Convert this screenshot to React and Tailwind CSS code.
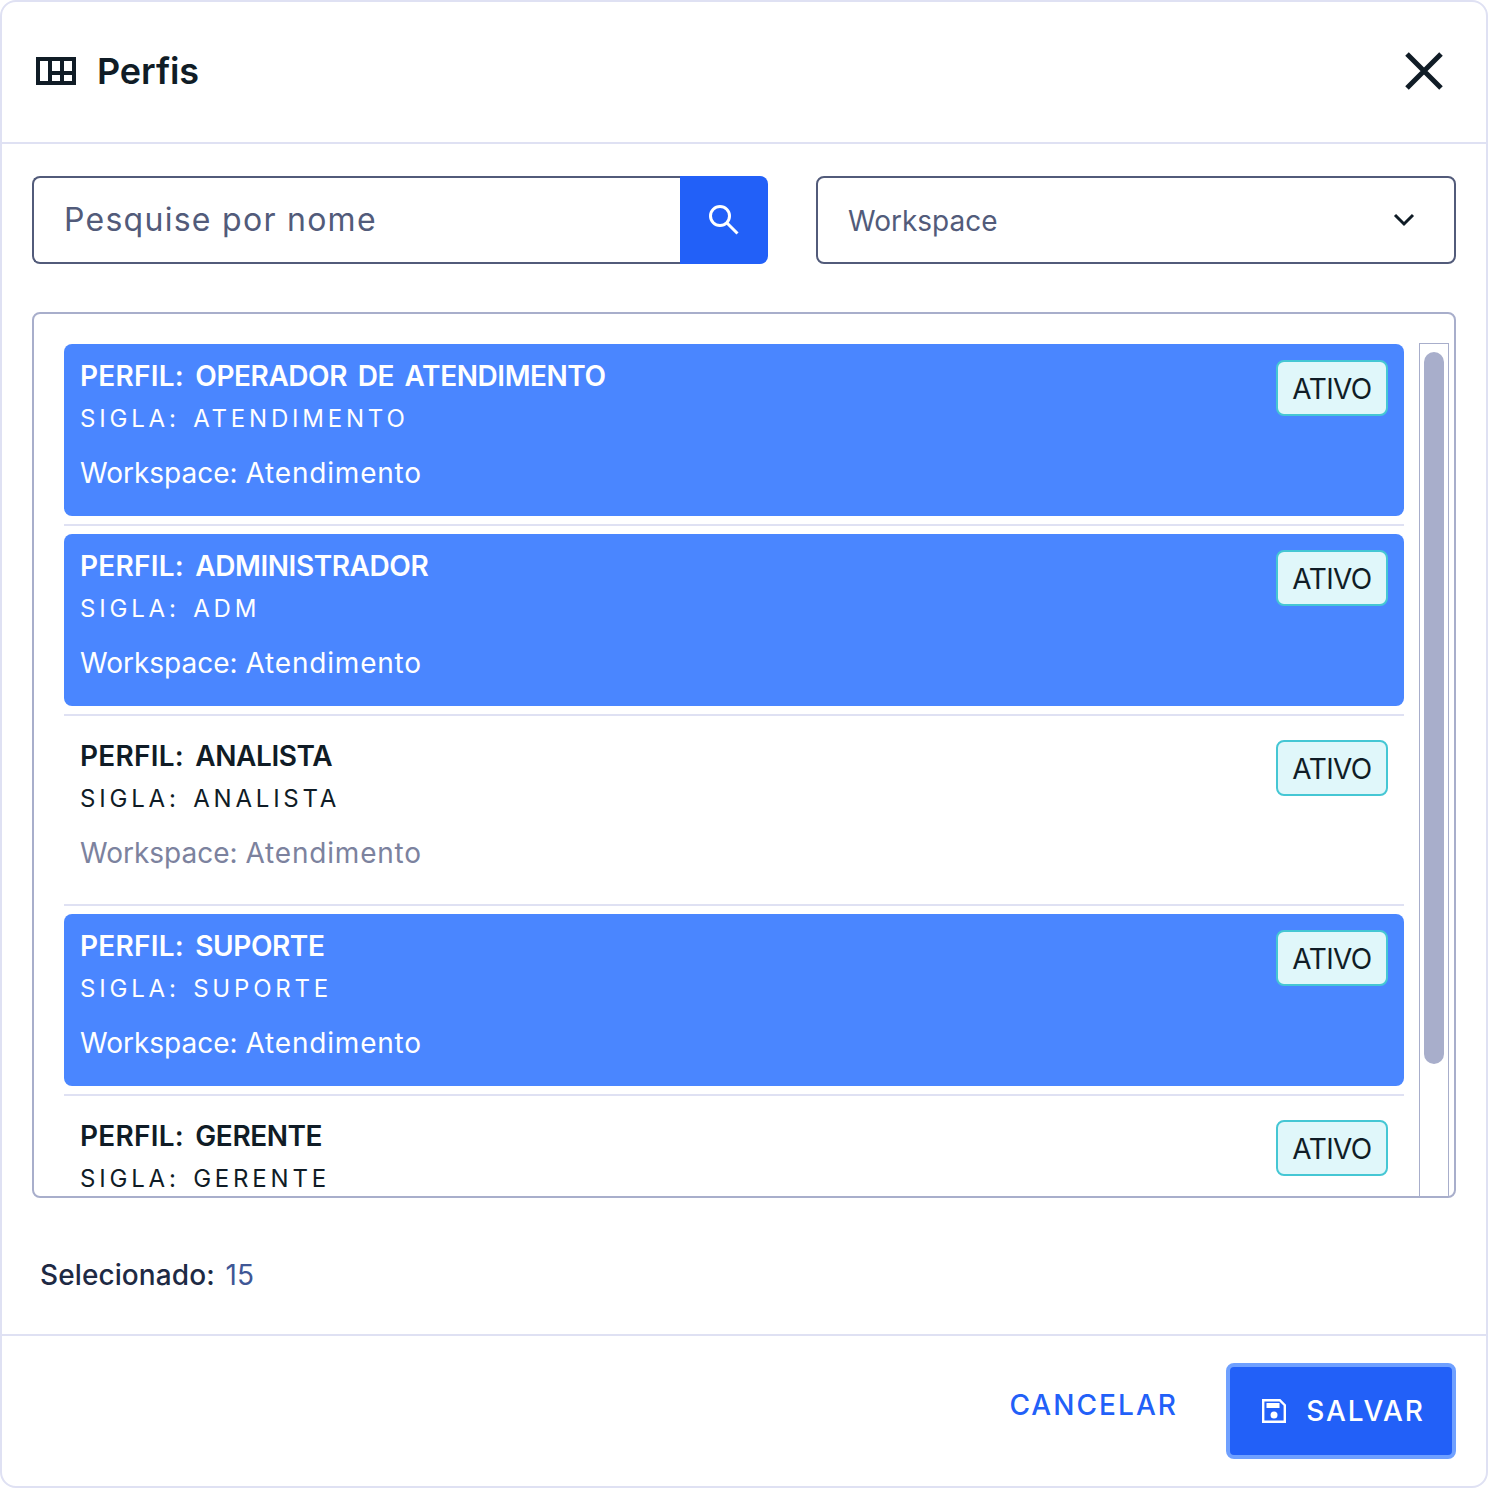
import React from 'react';

const PROFILES = [
  { name: 'OPERADOR DE ATENDIMENTO', sigla: 'ATENDIMENTO', selected: true },
  { name: 'ADMINISTRADOR', sigla: 'ADM', selected: true },
  { name: 'ANALISTA', sigla: 'ANALISTA', selected: false },
  { name: 'SUPORTE', sigla: 'SUPORTE', selected: true },
  { name: 'GERENTE', sigla: 'GERENTE', selected: false },
];

const ProfileRow = ({ profile }) => {
  const { name, sigla, selected } = profile;
  return (
    <div className="shrink-0">
      <div className={`flex h-[172px] justify-between rounded-lg p-4 ${selected ? 'bg-[#4a86ff]' : 'bg-white'}`}>
        <div>
          <div className={`text-[28px] leading-8 font-semibold [word-spacing:4px] ${selected ? 'text-white' : 'text-[#101c26]'}`}>
            <span className="tracking-[0.25px]">PERFIL: </span>
            <span className="tracking-[-0.43px]">{name}</span>
          </div>
          <div className={`mt-[11px] text-[24px] leading-8 font-normal tracking-[3.8px] [word-spacing:3px] ${selected ? 'text-white' : 'text-[#101c26]'}`}>
            SIGLA: {sigla}
          </div>
          <div className={`mt-[22px] text-[28px] leading-8 ${selected ? 'text-white' : 'text-[#7c829e]'}`}>
            Workspace: <span className="tracking-[0.81px]">Atendimento</span>
          </div>
        </div>
        <div className="flex h-14 w-28 items-center justify-center rounded-lg border-2 border-[#45c7d4] bg-[#e0f7fa] pt-[2px] text-[28px] tracking-[-0.6px] text-[#101c26]">
          ATIVO
        </div>
      </div>
      <div className="my-2 h-[2px] bg-[#dfe1f3]" />
    </div>
  );
};

export default function App() {
  return (
    <div className="flex h-[1488px] w-[1488px] flex-col rounded-2xl border-2 border-[#dfe1f3] bg-white font-['Inter',sans-serif]">
      {/* header */}
      <div className="flex h-[142px] shrink-0 items-center justify-between border-b-2 border-[#dfe1f3] pr-[42px] pb-[2px] pl-[34px]">
        <div className="flex items-center gap-[21px]">
          <svg width="40" height="28" viewBox="0 0 40 28" fill="#101c26">
            <path fillRule="evenodd" d="M0 0h40v28H0zM4 4v20h8V4zM16 4v10h8V4zM28 4v10h8V4zM16 18v6h8v-6zM28 18v6h8v-6z" />
          </svg>
          <span className="text-[36px] leading-10 font-semibold tracking-[-0.1px] text-[#101c26]">Perfis</span>
        </div>
        <svg width="40" height="40" viewBox="0 0 40 40" fill="none" stroke="#101c26" strokeWidth="5">
          <path d="M3 3l34 34M37 3L3 37" />
        </svg>
      </div>

      {/* body */}
      <div className="flex min-h-0 flex-1 flex-col px-[30px] pt-8">
        <div className="flex h-[88px] shrink-0 gap-12">
          <div className="flex w-[736px]">
            <div className="flex flex-1 items-center rounded-l-lg border-2 border-r-0 border-[#525b7a] pl-[30px] text-[32px] tracking-[1.27px] text-[#525b7a]">
              Pesquise por nome
            </div>
            <div className="flex w-[88px] items-center justify-center rounded-r-lg bg-[#2260f8]">
              <svg width="30" height="30" viewBox="0 0 30 30" fill="none" stroke="white" strokeWidth="3">
                <circle cx="11" cy="11" r="9.5" />
                <path d="M18 18l10.5 10.5" />
              </svg>
            </div>
          </div>
          <div className="flex w-[640px] items-center justify-between rounded-lg border-2 border-[#525b7a] pr-[38px] pl-[30px] text-[28px] text-[#525b7a]">
            <span className="pt-[2px]">Workspace</span>
            <svg width="24" height="24" viewBox="0 0 24 24" fill="none" stroke="#101c26" strokeWidth="3">
              <path d="M3 7l9 9 9-9" />
            </svg>
          </div>
        </div>

        {/* list */}
        <div className="mt-12 flex h-[886px] shrink-0 overflow-hidden rounded-lg border-2 border-[#a8aecb] pt-[30px] pl-[30px]">
          <div className="flex w-[1340px] shrink-0 flex-col overflow-hidden">
            {PROFILES.map((profile) => (
              <ProfileRow key={profile.name} profile={profile} />
            ))}
          </div>
          <div className="-mt-px ml-[15px] h-[853px] w-[30px] shrink-0 border border-b-0 border-[#a8aecb] px-1 pt-2">
            <div className="h-[712px] w-5 rounded-[10px] bg-[#a8aecb]" />
          </div>
        </div>

        <div className="mt-[61px] pl-2 text-[28px] leading-8 font-medium tracking-[0.1px] [word-spacing:3px] text-[#1e2a44]">
          Selecionado: <span className="font-normal text-[#3f5796]">15</span>
        </div>
      </div>

      {/* footer */}
      <div className="flex h-[152px] shrink-0 items-start justify-end gap-12 border-t-2 border-[#dfe1f3] pt-[27px] pr-[30px]">
        <button className="mt-[10px] h-[64px] text-[28px] font-medium tracking-[2.05px] text-[#2260f8]">CANCELAR</button>
        <button className="flex h-[96px] w-[230px] items-center justify-center gap-5 rounded-lg border-4 border-[#6fa0ff] bg-[#2260f8] pl-[5px] text-[28px] font-medium tracking-[1.8px] text-white">
          <svg width="24" height="24" viewBox="0 0 24 24" fill="none" stroke="white" strokeWidth="2.4">
            <path d="M1.2 1.2h16.6l5 5v16.6H1.2z" />
            <path d="M4.5 6.5h13" strokeWidth="5" />
            <circle cx="12" cy="16" r="3.5" fill="white" stroke="none" />
          </svg>
          SALVAR
        </button>
      </div>
    </div>
  );
}
